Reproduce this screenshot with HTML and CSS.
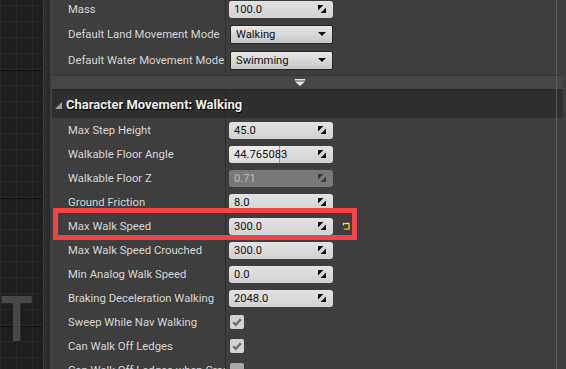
FILE: index.html
```html
<!DOCTYPE html>
<html>
<head>
<meta charset="utf-8">
<link rel="stylesheet" href="styles.css">
</head>
<body>
<div class="app">
  <div class="graph"><span class="graph-t">T</span></div>
  <div class="splitter"></div>
  <div class="details">
    <div class="rows rows-top">
      <div class="row">
        <div class="label">Mass</div>
        <div class="value"><div class="num"><span>100.0</span><svg class="spin" viewBox="0 0 8 8"><polygon points="0,0 5.5,0 0,5.5"/><polygon points="8,8 2.5,8 8,2.5"/></svg></div></div>
      </div>
      <div class="row row-tall">
        <div class="label">Default Land Movement Mode</div>
        <div class="value"><div class="combo"><span>Walking</span><svg class="caret" viewBox="0 0 8 4"><polygon points="0,0 8,0 4,4"/></svg></div></div>
      </div>
      <div class="row row-tall">
        <div class="label">Default Water Movement Mode</div>
        <div class="value"><div class="combo"><span>Swimming</span><svg class="caret" viewBox="0 0 8 4"><polygon points="0,0 8,0 4,4"/></svg></div></div>
      </div>
    </div>
    <div class="more-bar"><svg class="more-icon" viewBox="0 0 10 7"><rect x="0" y="0" width="10" height="1.5"/><polygon points="0,2.5 10,2.5 5,7"/></svg></div>
    <div class="category">
      <div class="cat-title"><svg class="cat-arrow" viewBox="0 0 7 7"><polygon points="7,0 7,7 0,7"/></svg><span>Character Movement: Walking</span></div>
      <div class="cat-rest"></div>
    </div>
    <div class="rows">
      <div class="row">
        <div class="label">Max Step Height</div>
        <div class="value"><div class="num"><span>45.0</span><svg class="spin" viewBox="0 0 8 8"><polygon points="0,0 5.5,0 0,5.5"/><polygon points="8,8 2.5,8 8,2.5"/></svg></div></div>
      </div>
      <div class="row">
        <div class="label">Walkable Floor Angle</div>
        <div class="value"><div class="num num-slider"><div class="fill" style="width:51px"></div><span>44.765083</span><svg class="spin" viewBox="0 0 8 8"><polygon points="0,0 5.5,0 0,5.5"/><polygon points="8,8 2.5,8 8,2.5"/></svg></div></div>
      </div>
      <div class="row">
        <div class="label">Walkable Floor Z</div>
        <div class="value"><div class="num num-disabled"><span>0.71</span><svg class="spin" viewBox="0 0 8 8"><polygon points="0,0 5.5,0 0,5.5"/><polygon points="8,8 2.5,8 8,2.5"/></svg></div></div>
      </div>
      <div class="row">
        <div class="label">Ground Friction</div>
        <div class="value"><div class="num"><span>8.0</span><svg class="spin" viewBox="0 0 8 8"><polygon points="0,0 5.5,0 0,5.5"/><polygon points="8,8 2.5,8 8,2.5"/></svg></div></div>
      </div>
      <div class="row">
        <div class="label">Max Walk Speed</div>
        <div class="value"><div class="num"><span>300.0</span><svg class="spin" viewBox="0 0 8 8"><polygon points="0,0 5.5,0 0,5.5"/><polygon points="8,8 2.5,8 8,2.5"/></svg></div><svg class="reset" viewBox="0 0 9 9"><path d="M1.5 3.6 V1.5 H7 V7.2 H2.2"/></svg></div>
      </div>
      <div class="row">
        <div class="label">Max Walk Speed Crouched</div>
        <div class="value"><div class="num"><span>300.0</span><svg class="spin" viewBox="0 0 8 8"><polygon points="0,0 5.5,0 0,5.5"/><polygon points="8,8 2.5,8 8,2.5"/></svg></div></div>
      </div>
      <div class="row">
        <div class="label">Min Analog Walk Speed</div>
        <div class="value"><div class="num"><span>0.0</span><svg class="spin" viewBox="0 0 8 8"><polygon points="0,0 5.5,0 0,5.5"/><polygon points="8,8 2.5,8 8,2.5"/></svg></div></div>
      </div>
      <div class="row">
        <div class="label">Braking Deceleration Walking</div>
        <div class="value"><div class="num"><span>2048.0</span><svg class="spin" viewBox="0 0 8 8"><polygon points="0,0 5.5,0 0,5.5"/><polygon points="8,8 2.5,8 8,2.5"/></svg></div></div>
      </div>
      <div class="row">
        <div class="label">Sweep While Nav Walking</div>
        <div class="value"><div class="check"><svg viewBox="0 0 14 14"><path d="M3.2 7.2 L5.8 9.8 L10.8 4.2"/></svg></div></div>
      </div>
      <div class="row">
        <div class="label">Can Walk Off Ledges</div>
        <div class="value"><div class="check"><svg viewBox="0 0 14 14"><path d="M3.2 7.2 L5.8 9.8 L10.8 4.2"/></svg></div></div>
      </div>
      <div class="row">
        <div class="label">Can Walk Off Ledges when Crouching</div>
        <div class="value"><div class="check check-off"></div></div>
      </div>
    </div>
    <div class="highlight"></div>
    <div class="scroll-line"></div>
  </div>
</div>
</body>
</html>
```

FILE: styles.css
```css
* { box-sizing: border-box; }
html, body {
  margin: 0;
  padding: 0;
  width: 566px;
  height: 369px;
  overflow: hidden;
  background: #3e3e3e;
  font-family: Roboto, "Noto Sans", "Liberation Sans", sans-serif;
}
.app {
  display: flex;
  width: 566px;
  height: 369px;
  overflow: hidden;
}
.graph {
  position: relative;
  width: 43px;
  flex: none;
  background-color: #1e1e1e;
  background-image:
    linear-gradient(to bottom, #0c0c0c 1px, transparent 1px),
    linear-gradient(to bottom, #292929 1px, transparent 1px),
    linear-gradient(to right, #292929 1px, transparent 1px);
  background-size: 100% 128px, 16px 16px, 16px 16px;
  background-position: 0 70px, 0 5px, 0 0;
}
.graph-t {
  position: absolute;
  left: 1px;
  top: 287px;
  font-family: "Liberation Sans", sans-serif;
  font-weight: bold;
  font-size: 64px;
  line-height: 1;
  color: #474747;
  transform: scaleX(0.8);
  transform-origin: left top;
}
.splitter {
  width: 7px;
  flex: none;
  background: #2b2b2b;
  border-left: 1px solid #3b3b3b;
}
.details {
  position: relative;
  flex: 1;
  display: flex;
  flex-direction: column;
  padding: 0 3px 0 2px;
  background: #3e3e3e;
}
.rows-top { margin-top: -3px; }
.row {
  display: grid;
  grid-template-columns: 174px 1fr;
  height: 24px;
  flex: none;
}
.row-tall { height: 26px; }
.label {
  display: flex;
  align-items: center;
  padding-left: 16px;
  border-right: 1px solid #2d2d2d;
  color: #d6d6d6;
  font-size: 11.3px;
  white-space: nowrap;
  overflow: hidden;
}
.value {
  display: flex;
  align-items: center;
  padding-left: 3px;
  gap: 9px;
}
.num {
  position: relative;
  width: 104px;
  height: 17px;
  border-radius: 3px;
  background: linear-gradient(#e2e2e2, #d3d3d3);
  display: flex;
  align-items: center;
  justify-content: space-between;
  padding: 0 7px 0 5px;
  font-size: 11.2px;
  color: #111;
  overflow: hidden;
}
.num span { position: relative; }
.num-slider .fill {
  position: absolute;
  left: 0;
  top: 0;
  bottom: 0;
  background: linear-gradient(#ececec, #dcdcdc);
  border-right: 1px solid #9a9a9a;
  border-radius: 3px 0 0 3px;
}
.num-disabled {
  background: #787878;
  color: #b9b9b9;
}
.num-disabled .spin { fill: #3c3c3c; }
.spin {
  position: relative;
  flex: none;
  width: 8px;
  height: 8px;
  fill: #0a0a0a;
}
.combo {
  width: 103px;
  height: 19px;
  margin-left: 1px;
  border: 1px solid #262626;
  border-radius: 2px;
  background: linear-gradient(#e8e8e8, #c6c6c6);
  display: flex;
  align-items: center;
  justify-content: space-between;
  padding: 0 6px 0 5px;
  font-size: 11.2px;
  color: #111;
}
.caret {
  flex: none;
  width: 8px;
  height: 4px;
  fill: #111;
}
.reset {
  flex: none;
  width: 9px;
  height: 9px;
  fill: none;
  stroke: #ffe81c;
  stroke-width: 1.3;
  filter: drop-shadow(0.5px 0.5px 0 #000);
}
.check {
  flex: none;
  width: 14px;
  height: 14px;
  margin-left: 1px;
  border-radius: 2px;
  background: #d2d2d2;
}
.check svg {
  display: block;
  width: 14px;
  height: 14px;
  fill: none;
  stroke: #6a6a6a;
  stroke-width: 2.2;
}
.check-off { background: #a8a8a8; }
.more-bar {
  flex: none;
  height: 14px;
  margin-top: 2px;
  background: #464646;
  border-top: 1px solid #363636;
  display: flex;
  align-items: center;
  padding-left: 243px;
}
.more-icon {
  flex: none;
  width: 10px;
  height: 7px;
  fill: #e6e6e6;
}
.category {
  flex: none;
  height: 29px;
  display: grid;
  grid-template-columns: 174px 1fr;
  background: #2f2f2f;
  border-top: 1px solid #282828;
}
.cat-title {
  display: flex;
  align-items: center;
  padding-left: 3px;
  gap: 4px;
  border-right: 1px solid #262626;
  color: #ececec;
  font-size: 13px;
  font-weight: bold;
  white-space: nowrap;
  text-shadow: 1px 1px 1px #000;
}
.cat-title span { position: relative; z-index: 1; }
.cat-arrow {
  flex: none;
  width: 7px;
  height: 7px;
  fill: #a0a0a0;
  margin-top: 2px;
}
.highlight {
  position: absolute;
  left: 3px;
  top: 208px;
  width: 304px;
  height: 32px;
  border: 5px solid #f24444;
}
.scroll-line {
  position: absolute;
  left: 506px;
  top: 0;
  bottom: 0;
  width: 1px;
  background: #5a5a5a;
}
```
